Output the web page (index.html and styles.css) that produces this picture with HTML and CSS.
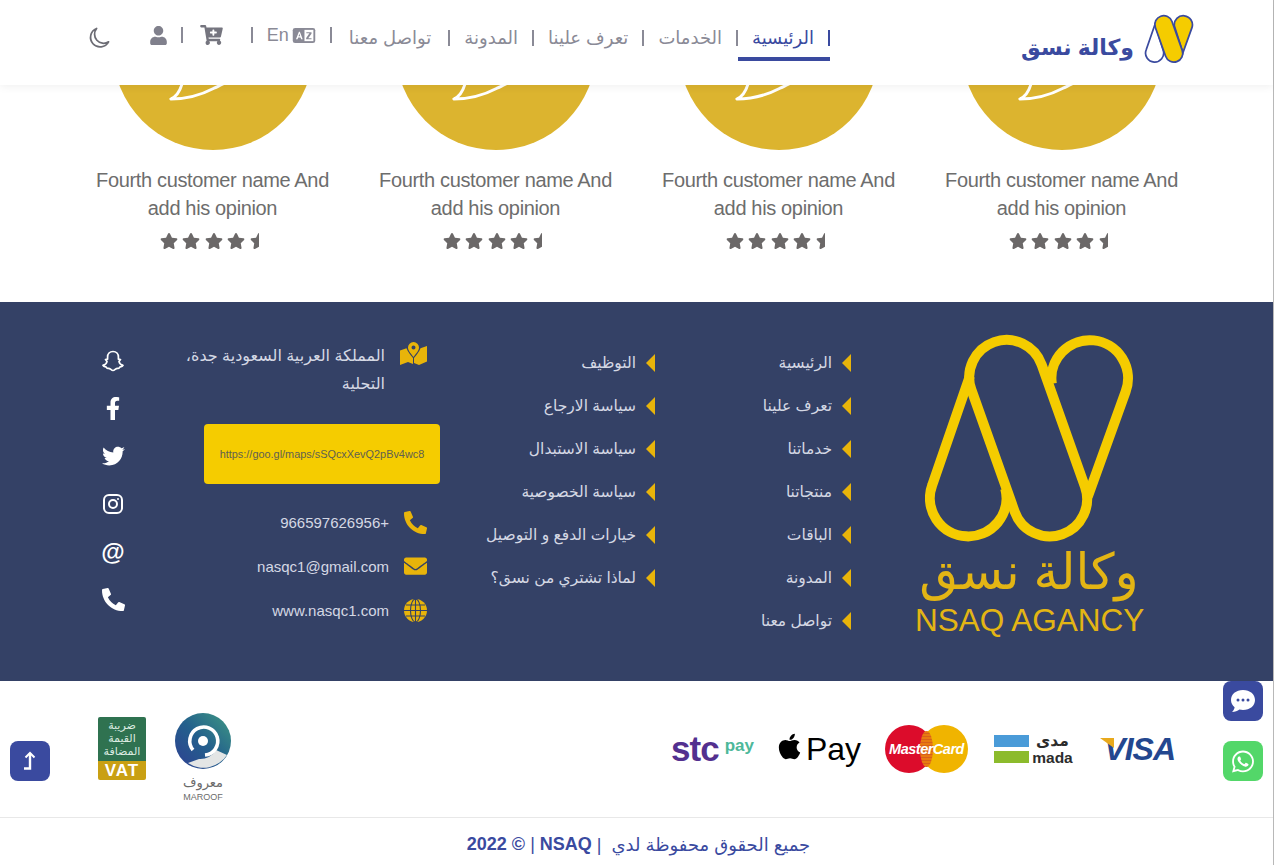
FILE: index.html
```html
<!DOCTYPE html>
<html lang="ar" dir="rtl">
<head>
<meta charset="UTF-8">
<meta name="viewport" content="width=device-width, initial-scale=1">
<title>NSAQ</title>
<link rel="stylesheet" href="styles.css">
</head>
<body>

<svg class="sprite" xmlns="http://www.w3.org/2000/svg">
	<symbol id="star" viewBox="0 0 576 512"><path d="M259.3 17.8L194 150.2 47.9 171.5c-26.2 3.8-36.7 36.1-17.7 54.6l105.7 103-25 145.5c-4.5 26.3 23.2 46 46.4 33.7L288 439.6l130.7 68.7c23.2 12.2 50.9-7.4 46.4-33.7l-25-145.5 105.7-103c19-18.5 8.5-50.8-17.7-54.6L382 150.2 316.7 17.8c-11.7-23.6-45.6-23.9-57.4 0z"/></symbol>
	<symbol id="star-half" viewBox="0 0 576 512"><path d="M288 0c-11.4 0-22.8 5.9-28.7 17.8L194 150.2 47.9 171.4c-26.2 3.8-36.7 36.1-17.7 54.6l105.7 103-25 145.5c-4.5 26.1 23 46 46.4 33.7L288 439.6V0z"/></symbol>
	<symbol id="phone" viewBox="0 0 512 512"><path d="M497.39 361.8l-112-48a24 24 0 0 0-28 6.9l-49.6 60.6A370.66 370.66 0 0 1 130.6 204.11l60.6-49.6a23.94 23.94 0 0 0 6.9-28l-48-112A24.16 24.16 0 0 0 122.6.61l-104 24A24 24 0 0 0 0 48c0 256.5 207.9 464 464 464a24 24 0 0 0 23.4-18.6l24-104a24.29 24.29 0 0 0-14.01-27.6z"/></symbol>
	<symbol id="avatar" viewBox="0 0 204 204">
		<circle cx="102" cy="102" r="102" fill="#dcb42f"/>
		<path d="M71 134Q68 148 59 152Q82 152 103 141C108 139 115 135 125 130C145 122 152 110 152 100C152 75 130 56 102 56C74 56 52 75 52 100C52 115 60 127 71 134Z" fill="none" stroke="#fff" stroke-width="3" stroke-linejoin="round"/>
	</symbol>
	<symbol id="nsaq-mark" viewBox="130 40 635 630">
		<path class="mark-left" d="M270 167L157 494A115 115 0 1 0 376 505Z"/>
		<path class="mark-right" d="M516 190A115 115 0 1 1 738 214L624 530Z"/>
		<path class="mark-mid" d="M485.6 133.5A112 112 0 0 0 274.4 208.5L404.4 574.5A112 112 0 0 0 615.6 499.5Z"/>
	</symbol>
</svg>

<div class="page">

<header class="topbar">
	<a class="brand">
		<svg class="brand-mark" width="50" height="50"><use href="#nsaq-mark"/></svg>
		<span class="brand-name">وكالة نسق</span>
	</a>
	<nav class="menu">
		<a class="menu-link active">الرئيسية</a>
		<a class="menu-link">الخدمات</a>
		<a class="menu-link">تعرف علينا</a>
		<a class="menu-link">المدونة</a>
		<a class="menu-link wide">تواصل معنا</a>
		<a class="menu-link tool lang">
			<svg width="24" height="15" viewBox="0 0 24 16"><rect width="24" height="16" rx="2.5" fill="#8a8a96"/><rect x="12.5" y="2" width="9.5" height="12" fill="#fff"/><path d="M3.4 12L6.6 4H7.6L10.6 12H9L8.3 10H5.8L5.1 12ZM6.2 8.8H7.9L7.05 6.2Z" fill="#fff"/><path d="M14.5 4.5H20V6L16.5 10.8H20V12H14.3V10.6L17.8 5.7H14.5Z" fill="#8a8a96"/></svg>
			<span class="lang-name">En</span>
		</a>
		<a class="menu-link tool cart">
			<svg width="23" height="20" viewBox="0 0 576 512" fill="#75757f"><path d="M504.717 320H211.572l6.545 32h268.418c15.401 0 26.816 14.301 23.403 29.319l-5.517 24.276C523.112 414.668 536 433.828 536 456c0 31.202-25.519 56.444-56.824 55.994-29.823-.429-54.35-24.631-55.155-54.447-.44-16.287 6.085-31.049 16.803-41.548H231.176c10.377 10.166 16.824 24.315 16.824 39.999 0 31.811-26.551 57.394-58.725 55.882-28.568-1.342-51.794-24.426-53.073-52.984-.988-22.064 10.059-41.557 26.965-52.705L107.19 64H24C10.745 64 0 53.255 0 40V24C0 10.745 10.745 0 24 0h102.529c11.417 0 21.261 8.044 23.513 19.237L159.208 64H551.99c15.401 0 26.816 14.301 23.403 29.319l-47.273 208C525.637 312.246 515.923 320 504.717 320zM408 168h-48v-40c0-8.837-7.163-16-16-16h-16c-8.837 0-16 7.163-16 16v40h-48c-8.837 0-16 7.163-16 16v16c0 8.837 7.163 16 16 16h48v40c0 8.837 7.163 16 16 16h16c8.837 0 16-7.163 16-16v-40h48c8.837 0 16-7.163 16-16v-16c0-8.837-7.163-16-16-16z"/></svg>
		</a>
		<a class="menu-link tool user">
			<svg width="17" height="19" viewBox="0 0 448 512" fill="#80808c"><path d="M224 256c70.7 0 128-57.3 128-128S294.7 0 224 0 96 57.3 96 128s57.3 128 128 128zm89.6 32h-16.7c-22.2 10.2-46.9 16-72.9 16s-50.6-5.8-72.9-16h-16.7C60.2 288 0 348.2 0 422.4V464c0 26.5 21.5 48 48 48h352c26.5 0 48-21.5 48-48v-41.6c0-74.2-60.2-134.4-134.4-134.4z"/></svg>
		</a>
		<a class="moon">
			<svg width="22" height="22" viewBox="0 0 23 23" fill="none" stroke="#6c6c74" stroke-width="1.8" stroke-linejoin="round"><path d="M9 1.5A10 10 0 1 0 21.5 15.5A9.5 9.5 0 0 1 9 1.5Z"/></svg>
		</a>
	</nav>
</header>

<section class="opinions">
	<div class="opinion">
		<svg class="avatar" width="200" height="200"><use href="#avatar"/></svg>
		<p>Fourth customer name And add his opinion</p>
		<div class="stars"><svg><use href="#star"/></svg><svg><use href="#star"/></svg><svg><use href="#star"/></svg><svg><use href="#star"/></svg><svg><use href="#star-half"/></svg></div>
	</div>
	<div class="opinion">
		<svg class="avatar" width="200" height="200"><use href="#avatar"/></svg>
		<p>Fourth customer name And add his opinion</p>
		<div class="stars"><svg><use href="#star"/></svg><svg><use href="#star"/></svg><svg><use href="#star"/></svg><svg><use href="#star"/></svg><svg><use href="#star-half"/></svg></div>
	</div>
	<div class="opinion">
		<svg class="avatar" width="200" height="200"><use href="#avatar"/></svg>
		<p>Fourth customer name And add his opinion</p>
		<div class="stars"><svg><use href="#star"/></svg><svg><use href="#star"/></svg><svg><use href="#star"/></svg><svg><use href="#star"/></svg><svg><use href="#star-half"/></svg></div>
	</div>
	<div class="opinion">
		<svg class="avatar" width="200" height="200"><use href="#avatar"/></svg>
		<p>Fourth customer name And add his opinion</p>
		<div class="stars"><svg><use href="#star"/></svg><svg><use href="#star"/></svg><svg><use href="#star"/></svg><svg><use href="#star"/></svg><svg><use href="#star-half"/></svg></div>
	</div>
</section>

<footer class="footer">
	<div class="footer-logo">
		<svg class="footer-mark" width="208" height="208" viewBox="135 42 625 623"><g fill="none" stroke="#f5cc00" stroke-width="30"><path d="M270 167L157 494A115 115 0 1 0 376 505"/><path d="M516 190A115 115 0 1 1 738 214L624 530"/><path d="M485.6 133.5A112 112 0 0 0 274.4 208.5L404.4 574.5A112 112 0 0 0 615.6 499.5Z"/></g></svg>
		<div class="logo-ar">وكالة نسق</div>
		<div class="logo-en" dir="ltr">NSAQ AGANCY</div>
	</div>

	<ul class="links links-main">
		<li>الرئيسية</li>
		<li>تعرف علينا</li>
		<li>خدماتنا</li>
		<li>منتجاتنا</li>
		<li>الباقات</li>
		<li>المدونة</li>
		<li>تواصل معنا</li>
	</ul>

	<ul class="links links-more">
		<li>التوظيف</li>
		<li>سياسة الارجاع</li>
		<li>سياسة الاستبدال</li>
		<li>سياسة الخصوصية</li>
		<li>خيارات الدفع و التوصيل</li>
		<li>لماذا تشتري من نسق؟</li>
	</ul>

	<div class="contact">
		<div class="address">
			<svg width="27" height="23" viewBox="0 0 27 23"><path d="M13.5 0A5.6 5.6 0 0 0 8 5.6C8 8.6 11.5 12.5 13.5 15C15.5 12.5 19 8.6 19 5.6A5.6 5.6 0 0 0 13.5 0ZM13.5 7.4A2 2 0 1 1 13.5 3.4A2 2 0 0 1 13.5 7.4Z" fill="#e8b40a"/><path d="M0 8.5L6.5 6.2C7.6 9.5 10.5 13 13 16L13 22L8 20L0 23ZM14 16C16.5 13 19.4 9.5 20.5 6.2L27 4V19.5L19 23L14 21Z" fill="#e8b40a"/></svg>
			<p>المملكة العربية السعودية جدة، التحلية</p>
		</div>
		<a class="map-link" dir="ltr">https://goo.gl/maps/sSQcxXevQ2pBv4wc8</a>
		<div class="contact-row phone-row">
			<svg width="23" height="23"><use href="#phone"/></svg>
			<span dir="ltr">966597626956+</span>
		</div>
		<div class="contact-row mail-row">
			<svg width="23" height="18" viewBox="0 64 512 384"><path d="M502.3 190.8c3.9-3.1 9.7-.2 9.7 4.7V400c0 26.5-21.5 48-48 48H48c-26.5 0-48-21.5-48-48V195.6c0-5 5.7-7.8 9.7-4.7 22.4 17.4 52.1 39.5 154.1 113.6 21.1 15.4 56.7 47.8 92.2 47.6 35.7.3 72-32.8 92.3-47.6 102-74.1 131.6-96.3 154-113.7zM256 320c23.2.4 56.6-29.2 73.4-41.4 132.7-96.3 142.8-104.7 173.4-128.7 5.8-4.5 9.2-11.5 9.2-18.9v-19c0-26.5-21.5-48-48-48H48C21.5 64 0 85.5 0 112v19c0 7.4 3.4 14.3 9.2 18.9 30.6 23.9 40.7 32.4 173.4 128.7 16.8 12.2 50.2 41.8 73.4 41.4z"/></svg>
			<span>nasqc1@gmail.com</span>
		</div>
		<div class="contact-row web-row">
			<svg width="23" height="23" viewBox="0 0 23 23"><circle cx="11.5" cy="11.5" r="11.5" fill="#e8b40a"/><g fill="none" stroke="#344166" stroke-width="1.1"><ellipse cx="11.5" cy="11.5" rx="5" ry="11.5"/><path d="M11.5 0V23M0 11.5H23M2 6H21M2 17H21"/></g></svg>
			<span>www.nasqc1.com</span>
		</div>
	</div>

	<div class="social">
		<svg width="22" height="22" viewBox="0 0 22 22" fill="none" stroke="#fff" stroke-width="1.7" stroke-linejoin="round"><path d="M11 1.5C7.6 1.5 5.6 4 5.6 7V9.2L3.5 9.6L5 11.6C4.6 13.4 3 14.8 1 15.4C1.6 16.6 3 16.7 4.2 17C4.6 18 4.9 18.6 6 18.4C8.4 18 9 20.5 11 20.5C13 20.5 13.6 18 16 18.4C17.1 18.6 17.4 18 17.8 17C19 16.7 20.4 16.6 21 15.4C19 14.8 17.4 13.4 17 11.6L18.5 9.6L16.4 9.2V7C16.4 4 14.4 1.5 11 1.5Z"/></svg>
		<svg width="14" height="23" viewBox="20 0 280 512" fill="#fff"><path d="M279.14 288l14.22-92.66h-88.91v-60.13c0-25.35 12.42-50.06 52.24-50.06h40.42V6.26S260.43 0 225.36 0c-73.22 0-121.08 44.38-121.08 124.72v70.62H22.89V288h81.39v224h100.17V288z"/></svg>
		<svg width="23" height="20" viewBox="0 40 512 430" fill="#fff"><path d="M459.37 151.716c.325 4.548.325 9.097.325 13.645 0 138.72-105.583 298.558-298.558 298.558-59.452 0-114.68-17.219-161.137-47.106 8.447.974 16.568 1.299 25.34 1.299 49.055 0 94.213-16.568 130.274-44.832-46.132-.975-84.792-31.188-98.112-72.772 6.498.974 12.995 1.624 19.818 1.624 9.421 0 18.843-1.3 27.614-3.573-48.081-9.747-84.143-51.98-84.143-102.985v-1.299c13.969 7.797 30.214 12.67 47.431 13.319-28.264-18.843-46.781-51.005-46.781-87.391 0-19.492 5.197-37.36 14.294-52.954 51.655 63.675 129.3 105.258 216.365 109.807-1.624-7.797-2.599-15.918-2.599-24.04 0-57.828 46.782-104.934 104.934-104.934 30.213 0 57.502 12.67 76.67 33.137 23.715-4.548 46.456-13.32 66.599-25.34-7.798 24.366-24.366 44.833-46.132 57.827 21.117-2.273 41.584-8.122 60.426-16.243-14.292 20.791-32.161 39.308-52.628 54.253z"/></svg>
		<svg width="20" height="20" viewBox="0 0 20 20" fill="none" stroke="#fff" stroke-width="2"><rect x="1" y="1" width="18" height="18" rx="5"/><circle cx="10" cy="10" r="4"/><circle cx="15" cy="5" r="1" fill="#fff" stroke="none"/></svg>
		<span class="social-at" dir="ltr">@</span>
		<svg width="23" height="23" fill="#fff"><use href="#phone"/></svg>
	</div>
</footer>

<section class="trust">
	<div class="payments" dir="ltr">
		<div class="pay stc"><b>stc</b><span>pay</span></div>
		<div class="pay apple">
			<svg width="23" height="29" viewBox="0 0 384 512"><path d="M318.7 268.7c-.2-36.7 16.4-64.4 50-84.8-18.8-26.9-47.2-41.7-84.7-44.6-35.5-2.8-74.3 20.7-88.5 20.7-15 0-49.4-19.7-76.4-19.7C63.3 141.2 4 184.8 4 273.5q0 39.3 14.4 81.2c12.8 36.7 59 126.7 107.2 125.2 25.2-.6 43-17.9 75.8-17.9 31.8 0 48.3 17.9 76.4 17.9 48.6-.7 90.4-82.5 102.6-119.3-65.2-30.7-61.7-90-61.7-91.9zm-56.6-164.2c27.3-32.4 24.8-61.9 24-72.5-24.1 1.4-52 16.4-67.9 34.9-17.5 19.8-27.8 44.3-25.6 71.9 26.1 2 49.9-11.4 69.5-34.3z"/></svg>
			<span>Pay</span>
		</div>
		<div class="pay master">
			<i class="mc-red"></i><i class="mc-yellow"></i><i class="mc-mid"></i>
			<span>MasterCard</span>
		</div>
		<div class="pay mada">
			<div class="mada-bars"><i></i><i></i></div>
			<div class="mada-text"><span>مدى</span><span>mada</span></div>
		</div>
		<div class="pay visa"><i></i><span>VISA</span></div>
	</div>
	<div class="badges">
		<div class="maroof">
			<svg width="56" height="56" viewBox="0 0 56 56">
				<defs><linearGradient id="maroofGrad" x1="0" y1="1" x2="1" y2="0"><stop offset="0" stop-color="#2f3f92"/><stop offset=".5" stop-color="#23608c"/><stop offset="1" stop-color="#3f9a83"/></linearGradient></defs>
				<circle cx="28" cy="28" r="28" fill="url(#maroofGrad)"/>
				<path d="M13 50A28 28 0 0 0 52 42L41 37A18 18 0 0 1 24 46Z" fill="#e3e5e5"/>
				<path d="M18 37A14 14 0 1 1 30 42" fill="none" stroke="#fff" stroke-width="3.600"/>
				<circle cx="28" cy="28" r="5" fill="#fff"/>
			</svg>
			<span class="maroof-ar">معروف</span>
			<span class="maroof-en" dir="ltr">MAROOF</span>
		</div>
		<div class="vat">
			<div class="vat-top">ضريبة<br>القيمة<br>المضافة</div>
			<div class="vat-bottom" dir="ltr">VAT</div>
		</div>
	</div>
</section>

<div class="copyright">جميع الحقوق محفوظة لدي &nbsp;| <b>NSAQ</b> | <b dir="ltr">2022 ©</b></div>

</div>

<a class="float-btn chat-btn">
	<svg width="26" height="24" viewBox="0 0 26 24"><path d="M13 1C6 1 1 5.300 1 11C1 14 2.400 16.500 4.600 18.200C4.400 20 3.400 21.700 2 23C5 22.800 7.600 21.800 9.400 20.500C10.600 20.800 11.800 21 13 21C20 21 25 16.700 25 11C25 5.300 20 1 13 1Z" fill="#fff"/><g fill="#3a4a9f"><circle cx="8" cy="11" r="1.500"/><circle cx="13" cy="11" r="1.500"/><circle cx="18" cy="11" r="1.500"/></g></svg>
</a>
<a class="float-btn whats-btn">
	<svg width="22" height="25" viewBox="0 0 448 512" fill="#fff"><path d="M380.9 97.1C339 55.1 283.2 32 223.9 32c-122.4 0-222 99.6-222 222 0 39.1 10.2 77.3 29.6 111L0 480l117.7-30.9c32.4 17.7 68.9 27 106.1 27h.1c122.3 0 224.1-99.6 224.1-222 0-59.3-25.2-115-67.1-157zm-157 341.6c-33.2 0-65.7-8.9-94-25.7l-6.7-4-69.8 18.3L72 359.2l-4.4-7c-18.5-29.4-28.2-63.3-28.2-98.2 0-101.7 82.8-184.5 184.6-184.5 49.3 0 95.6 19.2 130.4 54.1 34.8 34.9 56.2 81.2 56.1 130.5 0 101.8-84.9 184.6-186.6 184.6zm101.2-138.2c-5.5-2.8-32.8-16.2-37.9-18-5.1-1.9-8.8-2.8-12.5 2.8-3.7 5.6-14.3 18-17.6 21.8-3.2 3.7-6.5 4.2-12 1.4-32.6-16.3-54-29.1-75.5-66-5.7-9.8 5.7-9.1 16.3-30.3 1.8-3.7.9-6.9-.5-9.7-1.4-2.8-12.5-30.1-17.1-41.2-4.5-10.8-9.1-9.3-12.5-9.5-3.2-.2-6.9-.2-10.6-.2-3.7 0-9.7 1.4-14.8 6.9-5.1 5.6-19.4 19-19.4 46.3 0 27.3 19.9 53.7 22.6 57.4 2.8 3.7 39.1 59.7 94.8 83.8 35.2 15.2 49 16.5 66.6 13.9 10.7-1.6 32.8-13.4 37.4-26.4 4.6-13 4.6-24.1 3.200-26.4-1.300-2.500-5-3.900-10.500-6.600z"/></svg>
</a>
<a class="float-btn top-btn">
	<svg width="14" height="20" viewBox="0 0 14 20" fill="none" stroke="#fff" stroke-width="2.400"><path d="M7 2V17.500H1"/><path d="M2.500 6.500L7 2L11.500 6.500" stroke-width="2"/></svg>
</a>

</body>
</html>
```

FILE: styles.css
```css
* {
	box-sizing: border-box;
}

html, body {
	margin: 0;
	padding: 0;
	height: 865px;
	overflow: hidden;
}

body {
	background-color: #ffffff;
	font-family: "Liberation Sans", "DejaVu Sans", sans-serif;
}

ul {
	list-style-type: none;
	margin: 0;
	padding: 0;
}

p {
	margin: 0;
}

.sprite {
	display: none;
}

.page {
	width: 1274px;
	border-right: 1px solid #b8b8b8;
}

/* header */
.topbar {
	position: relative;
	z-index: 2;
	height: 85px;
	display: flex;
	padding: 14px 79px 0 0;
	background-color: #ffffff;
	box-shadow: 0 2px 8px rgba(0, 0, 0, 0.06);
}

.brand {
	width: 171px;
	height: 50px;
	display: flex;
	align-items: flex-end;
	gap: 10px;
	margin-left: 193px;
}

.brand-mark {
	flex: none;
}

.mark-left {
	fill: #ffffff;
	stroke: #3a4a9f;
	stroke-width: 22;
}

.mark-right, .mark-mid {
	fill: #f5cc00;
	stroke: #3a4a9f;
	stroke-width: 22;
}

.brand-name {
	font-size: 22px;
	font-weight: bold;
	color: #3a4a9f;
	white-space: nowrap;
	line-height: 32px;
}

.menu {
	display: flex;
	align-items: flex-start;
	padding-top: 16px;
}

.menu-link {
	position: relative;
	height: 16px;
	padding: 0 14px;
	border-right: 2px solid #8a8a96;
	display: flex;
	align-items: center;
	font-size: 18px;
	color: #8a8a96;
	white-space: nowrap;
}

.menu-link.wide {
	padding: 0 17px;
}

.menu-link.active {
	color: #3a4a9f;
	border-right-color: #3a4a9f;
}

.menu-link.active::after {
	content: "";
	position: absolute;
	right: -2px;
	left: 0;
	top: 27px;
	height: 4px;
	background-color: #3a4a9f;
}

.menu-link.tool {
	margin-top: -3px;
	gap: 3px;
	padding: 0 14px;
}

.menu-link.cart {
	padding: 0 28px 0 17px;
}

.lang-name {
	font-size: 18px;
	color: #8a8a96;
}

.moon {
	margin: -3px 26px 0 0;
}

/* customers */
.opinions {
	height: 217px;
	overflow: hidden;
	display: grid;
	grid-template-columns: repeat(4, 283px);
	justify-content: center;
	padding-left: 1px;
}

.opinion {
	text-align: center;
}

.avatar {
	display: block;
	margin: -135px auto 16px;
}

.opinion p {
	font-size: 20px;
	letter-spacing: -0.35px;
	line-height: 28px;
	color: #6d6d6d;
	padding: 0 20px;
}

.stars {
	display: flex;
	justify-content: center;
	direction: ltr;
	gap: 4.500px;
	margin-top: 11px;
	padding-left: 2px;
	fill: #6b6868;
}

.stars svg {
	width: 18px;
	height: 16px;
}

/* footer */
.footer {
	height: 379px;
	display: flex;
	align-items: flex-start;
	padding: 32px 130px 0 0;
	background-color: #344166;
}

.footer-logo {
	width: 228px;
	margin-left: 64px;
	text-align: center;
	color: #e3b514;
}

.footer-mark {
	display: block;
	margin: 0 auto;
}

.logo-ar {
	font-size: 50px;
	line-height: 60px;
	white-space: nowrap;
}

.logo-en {
	font-size: 31.500px;
	line-height: 36px;
	white-space: nowrap;
}

.links {
	padding-top: 7px;
}

.links li {
	height: 43px;
	display: flex;
	align-items: center;
	font-size: 15.500px;
	color: #d4d8e4;
	white-space: nowrap;
}

.links li::before {
	content: "";
	width: 0;
	height: 0;
	margin-left: 10px;
	border-style: solid;
	border-width: 9px 9px 9px 0;
	border-color: transparent #e8b40a transparent transparent;
}

.links-main {
	width: 196px;
}

.links-more {
	width: 228px;
}

.contact {
	width: 260px;
	padding-top: 8px;
	font-size: 16px;
	color: #d4d8e4;
}

.address {
	display: flex;
	align-items: flex-start;
	gap: 15px;
}

.address svg {
	flex: none;
}

.address p {
	width: 205px;
	line-height: 28px;
}

.map-link {
	display: flex;
	align-items: center;
	justify-content: center;
	width: 236px;
	height: 60px;
	margin: 26px -13px 0 0;
	border-radius: 4px;
	background-color: #f5cc00;
	font-size: 10.900px;
	color: #5f6050;
}

.contact-row {
	display: flex;
	align-items: center;
	gap: 15px;
	height: 44px;
	font-size: 15px;
	fill: #e8b40a;
}

.phone-row {
	margin-top: 16px;
}

.social {
	width: 48px;
	margin: 3px 30px 0 0;
	display: grid;
	justify-items: center;
	align-items: center;
	grid-auto-rows: 47.800px;
}

.social-at {
	font-size: 24px;
	font-weight: bold;
	color: #ffffff;
}

/* payment and trust logos */
.trust {
	height: 137px;
	display: flex;
	align-items: center;
	justify-content: space-between;
	padding: 0 98px;
	border-bottom: 1px solid #e8e8e8;
}

.payments {
	display: flex;
	align-items: center;
	gap: 24px;
}

.pay {
	width: 83px;
	height: 50px;
	position: relative;
	display: flex;
	align-items: center;
	justify-content: center;
}

.stc {
	font-size: 35px;
	color: #53308f;
}

.stc b {
	letter-spacing: -1px;
}

.stc span {
	font-size: 17px;
	font-weight: bold;
	color: #4db89a;
	margin: -6px 0 0 6px;
}

.apple {
	gap: 5px;
}

.apple svg {
	flex: none;
	margin-top: -6px;
}

.apple span {
	font-size: 32px;
	color: #000000;
}

.mc-red, .mc-yellow, .mc-mid {
	position: absolute;
	top: 1px;
	width: 48px;
	height: 48px;
	border-radius: 50%;
}

.mc-red {
	left: 0;
	background-color: #dc0c2b;
}

.mc-yellow {
	right: 0;
	background-color: #f0b400;
}

.mc-mid {
	left: 35px;
	width: 13px;
	height: 36px;
	top: 7px;
	background: repeating-linear-gradient(#e87a10 0, #e87a10 2px, #d8601a 2px, #d8601a 3px);
}

.master span {
	position: relative;
	font-size: 14.500px;
	font-weight: bold;
	font-style: italic;
	color: #ffffff;
	letter-spacing: -0.500px;
}

.mada {
	gap: 3px;
}

.mada-bars {
	display: flex;
	flex-direction: column;
	gap: 4px;
}

.mada-bars i {
	display: block;
	width: 35px;
	height: 12px;
	background-color: #4a9bd8;
}

.mada-bars i + i {
	background-color: #8cbb2c;
}

.mada-text {
	display: flex;
	flex-direction: column;
	font-size: 15.500px;
	line-height: 17px;
	font-weight: bold;
	color: #2c2c2c;
	text-align: center;
}

.visa {
	width: 76px;
	justify-content: flex-end;
}

.visa span {
	font-size: 32px;
	font-weight: bold;
	font-style: italic;
	color: #23478f;
	letter-spacing: -1px;
}

.visa i {
	position: absolute;
	left: 1px;
	top: 14px;
	width: 14px;
	height: 10px;
	background-color: #e8a91c;
	clip-path: polygon(0 0, 100% 0, 100% 100%);
}

.badges {
	display: flex;
	align-items: flex-start;
	align-self: flex-start;
	gap: 29px;
	margin-top: 32px;
}

.maroof {
	width: 56px;
	display: flex;
	flex-direction: column;
	align-items: center;
	color: #6b6b6b;
}

.maroof-ar {
	font-size: 13px;
	line-height: 17px;
	margin-top: 5px;
}

.maroof-en {
	font-size: 9px;
	line-height: 12px;
}

.vat {
	width: 48px;
	height: 63px;
	border-radius: 2px;
	overflow: hidden;
	margin-top: 4px;
}

.vat-top {
	height: 44px;
	padding-top: 2px;
	background-color: #2f7250;
	color: #dcebe0;
	font-size: 11px;
	line-height: 13px;
	text-align: center;
}

.vat-bottom {
	height: 19px;
	background-color: #c9a013;
	color: #ffffff;
	font-size: 17px;
	line-height: 19px;
	font-weight: bold;
	text-align: center;
	letter-spacing: 1px;
}

/* copyright */
.copyright {
	height: 48px;
	display: flex;
	align-items: center;
	justify-content: center;
	gap: 5px;
	font-size: 18px;
	color: #3a4a9f;
	padding: 5px 0 0 4px;
}

/* floating buttons */
.float-btn {
	position: fixed;
	width: 40px;
	height: 40px;
	border-radius: 8px;
	display: flex;
	align-items: center;
	justify-content: center;
}

.chat-btn {
	left: 1223px;
	top: 681px;
	background-color: #3a4a9f;
}

.whats-btn {
	left: 1223px;
	top: 741px;
	background-color: #53d769;
}

.top-btn {
	left: 10px;
	top: 741px;
	background-color: #3a4a9f;
}
```
